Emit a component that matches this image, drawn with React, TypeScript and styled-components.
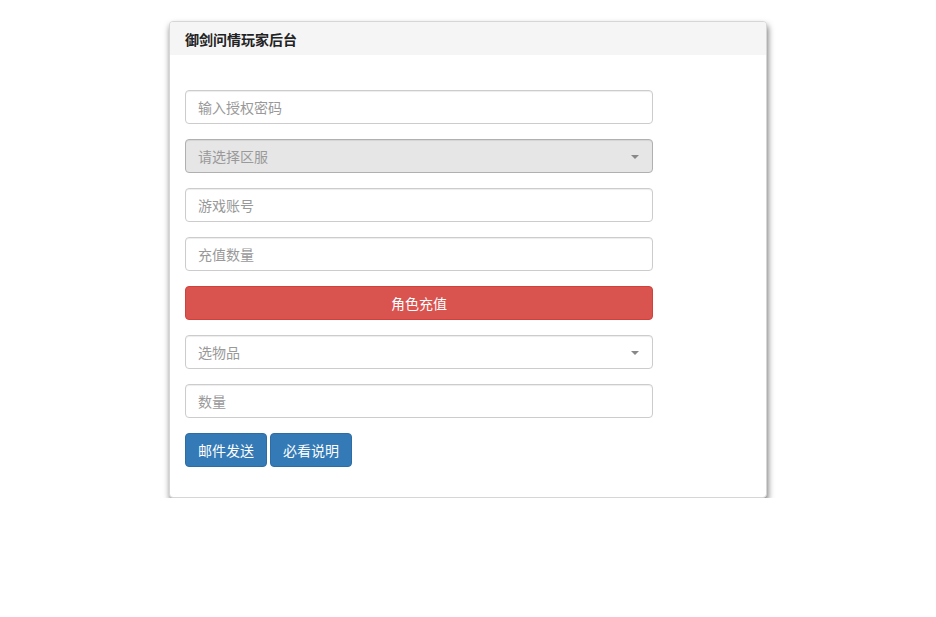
import React from "react";
import styled, { createGlobalStyle } from "styled-components";

const GlobalStyle = createGlobalStyle`
  body {
    margin: 0;
    background: #fff;
    font-family: "Liberation Sans", "Noto Sans CJK SC", sans-serif;
    font-size: 14px;
    color: #333;
  }
  * { box-sizing: border-box; }
`;

const Page = styled.div`
  padding-top: 21px;
`;

const Panel = styled.div`
  width: 598px;
  margin: 0 auto;
  background: #fff;
  border: 1px solid #d6d6d6;
  border-radius: 4px;
  box-shadow: 1px 4px 6px rgba(0, 0, 0, 0.55);
  overflow: hidden;
`;

const Heading = styled.div`
  background: #f5f5f5;
  padding: 0 15px;
  height: 33px;
  display: flex;
  align-items: center;
  font-weight: bold;
  font-size: 14px;
  color: #222;
`;

const Body = styled.div`
  padding: 35px 15px 30px;
  display: flex;
  flex-direction: column;
  gap: 15px;
`;

const Field = styled.div<{ $disabled?: boolean }>`
  position: relative;
  width: 468px;
  height: 34px;
  border: 1px solid ${({ $disabled }) => ($disabled ? "#b0b0b0" : "#ccc")};
  border-radius: 4px;
  background: ${({ $disabled }) => ($disabled ? "#e6e6e6" : "#fff")};
  box-shadow: inset 0 1px 1px rgba(0, 0, 0, 0.075);
  display: flex;
  align-items: center;
  padding: 0 12px;
  color: #999;
  font-size: 14px;
`;

const Caret = styled.span`
  position: absolute;
  right: 13px;
  top: 15px;
  width: 0;
  height: 0;
  border-left: 4px solid transparent;
  border-right: 4px solid transparent;
  border-top: 4px solid #888;
`;

const WideButton = styled.div`
  width: 468px;
  height: 34px;
  border: 1px solid #d43f3a;
  border-radius: 4px;
  background: #d9534f;
  color: #fff;
  display: flex;
  align-items: center;
  justify-content: center;
  font-size: 14px;
`;

const ButtonRow = styled.div`
  display: flex;
  gap: 3px;
`;

const Button = styled.div`
  width: 82px;
  height: 34px;
  border: 1px solid #2e6da4;
  border-radius: 4px;
  background: #337ab7;
  color: #fff;
  display: flex;
  align-items: center;
  justify-content: center;
  font-size: 14px;
`;

export default function App() {
  return (
    <>
      <GlobalStyle />
      <Page>
        <Panel>
          <Heading>御剑问情玩家后台</Heading>
          <Body>
            <Field>输入授权密码</Field>
            <Field $disabled>
              请选择区服
              <Caret />
            </Field>
            <Field>游戏账号</Field>
            <Field>充值数量</Field>
            <WideButton>角色充值</WideButton>
            <Field>
              选物品
              <Caret />
            </Field>
            <Field>数量</Field>
            <ButtonRow>
              <Button>邮件发送</Button>
              <Button>必看说明</Button>
            </ButtonRow>
          </Body>
        </Panel>
      </Page>
    </>
  );
}
